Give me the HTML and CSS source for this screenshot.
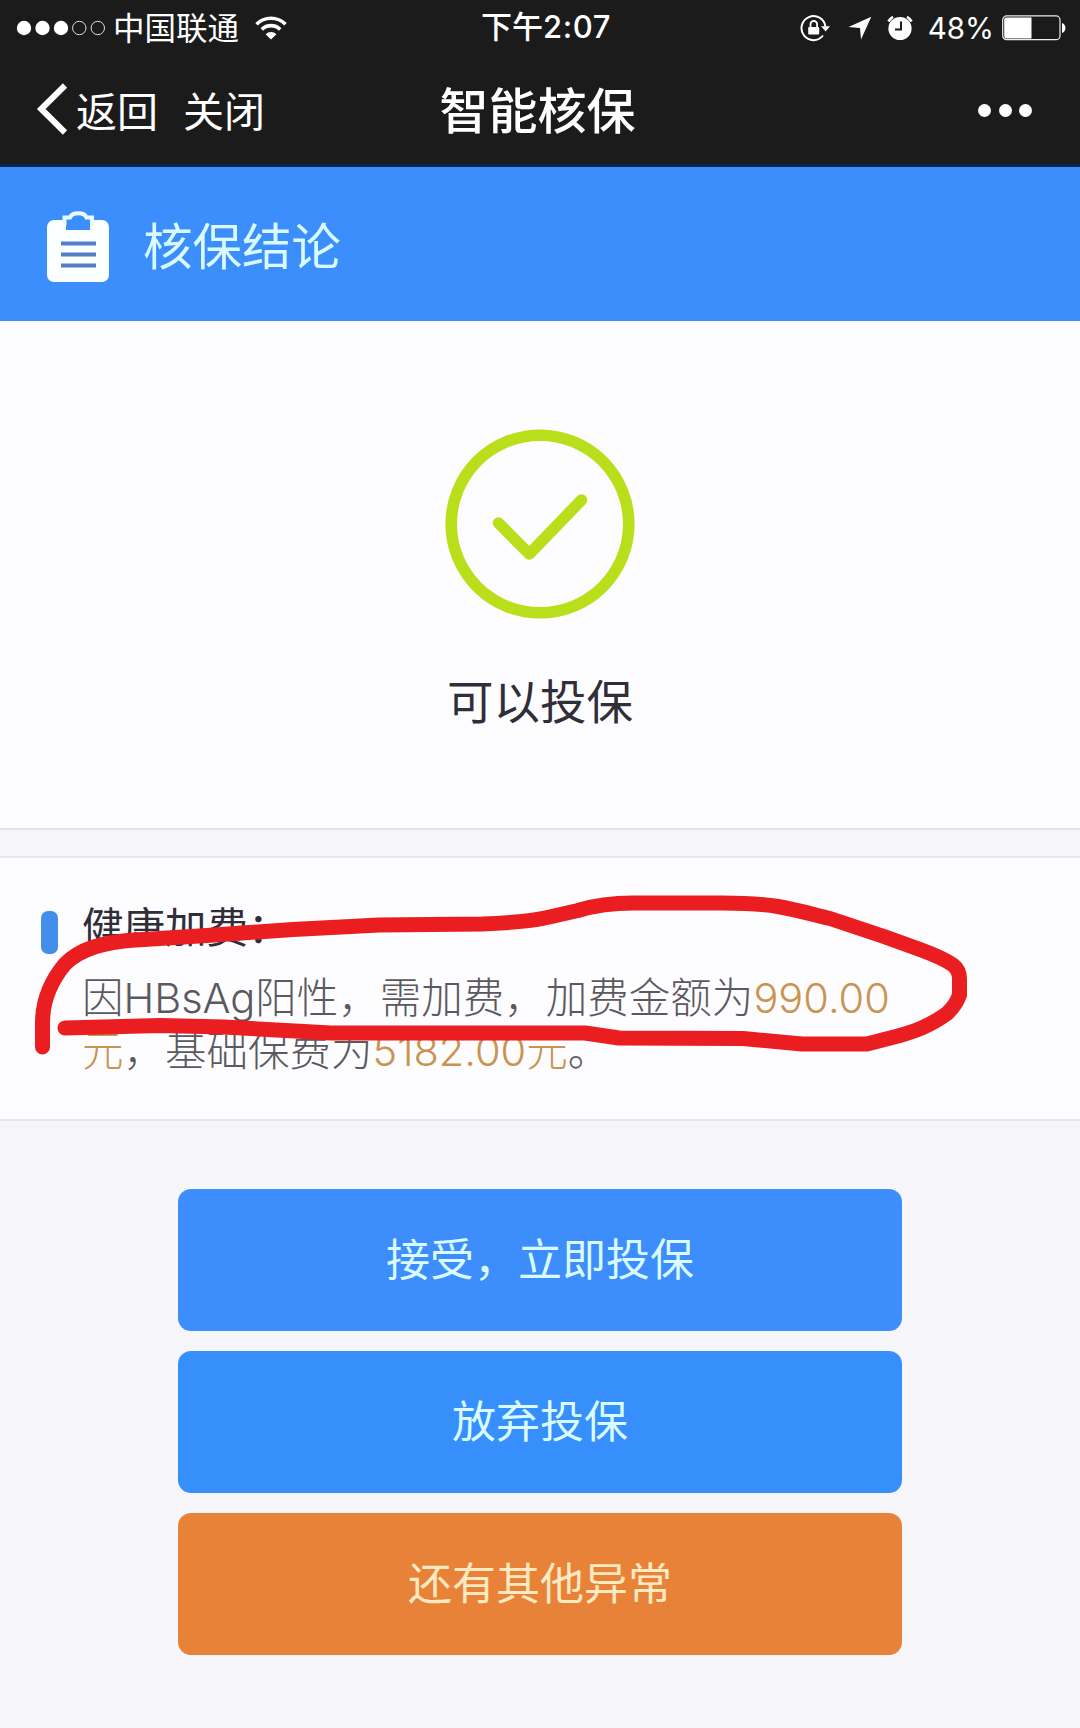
FILE: index.html
```html
<!DOCTYPE html>
<html lang="zh-CN">
<head>
    <meta charset="UTF-8">
    <meta name="viewport" content="width=device-width, initial-scale=1.0">
    <title>智能核保</title>
    <link rel="stylesheet" href="styles.css">
</head>
<body>

<div class="page">
    <header class="header">
        <div class="status-bar">
            <div class="status-left">
                <svg class="signal" width="90" height="18" viewBox="0 0 90 18">
                    <g fill="#fff">
                        <circle cx="8" cy="9" r="7.2"/>
                        <circle cx="26.5" cy="9" r="7.2"/>
                        <circle cx="45" cy="9" r="7.2"/>
                    </g>
                    <g fill="none" stroke="#ddd" stroke-width="1">
                        <circle cx="63.3" cy="9" r="6.7"/>
                        <circle cx="81.8" cy="9" r="6.7"/>
                    </g>
                </svg>
                <span class="carrier">中国联通</span>
                <svg class="wifi" width="32" height="24" viewBox="0 0 32 24">
                    <g fill="none" stroke="#fff" stroke-width="3.6">
                        <path d="M1.5 8.3a20.5 20.5 0 0 1 29 0"/>
                        <path d="M6.8 13.4a13 13 0 0 1 18.4 0"/>
                    </g>
                    <path d="M16 23.6l-5.4-5.3a7.6 7.6 0 0 1 10.8 0z" fill="#fff"/>
                </svg>
            </div>
            <div class="status-time">下午<span class="clock">2:07</span></div>
            <div class="status-right">
                <svg class="lock" width="30" height="28" viewBox="0 0 30 28">
                    <path d="M25.4 12.5A12 12 0 1 0 23 21.5" fill="none" stroke="#fff" stroke-width="2"/>
                    <path d="M21 12.2h9l-4.3 5.2z" fill="#fff"/>
                    <rect x="8.2" y="13" width="11" height="7.6" rx="1" fill="#fff"/>
                    <path d="M10.5 13.5v-3.2a3.3 3.3 0 0 1 6.6 0v3.2" fill="none" stroke="#fff" stroke-width="1.8"/>
                </svg>
                <svg class="location" width="24" height="24" viewBox="0 0 24 24">
                    <path d="M23.3 .8L13 23.4 12 12 .5 11z" fill="#fff"/>
                </svg>
                <svg class="alarm" width="26" height="26" viewBox="0 0 26 26">
                    <circle cx="13" cy="13.5" r="11.6" fill="#fff"/>
                    <path d="M14 6.5v8H8" fill="none" stroke="#1b1b1b" stroke-width="2"/>
                    <path d="M1.4 6.5a15 15 0 0 1 4.6-4.6M24.6 6.5a15 15 0 0 0-4.6-4.6" fill="none" stroke="#fff" stroke-width="2.6"/>
                </svg>
                <span class="percent">48%</span>
                <svg class="battery" width="66" height="26" viewBox="0 0 66 26">
                    <rect x=".7" y=".9" width="57.3" height="23.8" rx="4" fill="none" stroke="#eee" stroke-width="1.2"/>
                    <path d="M4.4 2.4H29.5v21H4.4a2.2 2.2 0 0 1-2.2-2.2V4.6a2.2 2.2 0 0 1 2.2-2.2z" fill="#fff"/>
                    <path d="M60 8c4.6 1.2 4.6 8.8 0 10z" fill="#fff"/>
                </svg>
            </div>
        </div>
        <nav class="nav">
            <div class="nav-left">
                <svg class="back" width="32" height="52" viewBox="0 0 32 52">
                    <path d="M29 2.5L5.2 26 29 49.5" fill="none" stroke="#fff" stroke-width="6"/>
                </svg>
                <a class="nav-link">返回</a>
                <a class="nav-link">关闭</a>
            </div>
            <h1 class="nav-title">智能核保</h1>
            <div class="nav-right">
                <span class="dot"></span>
                <span class="dot"></span>
                <span class="dot"></span>
            </div>
        </nav>
    </header>

    <div class="banner">
        <svg class="clipboard" width="64" height="72" viewBox="0 0 64 72">
            <rect x="1" y="9" width="62" height="62" rx="7" fill="#fbffff"/>
            <path d="M20 19V8h6a6.5 6.5 0 0 1 13 0h5v11z" fill="#3c8efc"/>
            <path d="M18.5 14V6.500h5.500a8.500 5.500 0 0 1 16.500 0h5.500V14" fill="none" stroke="#e9fbff" stroke-width="4"/>
            <path d="M15 32.500h35M15 43.500h35M15 54.500h35" stroke="#527fcb" stroke-width="4"/>
        </svg>
        <span class="banner-text">核保结论</span>
    </div>

    <section class="result">
        <svg class="result-icon" width="190" height="190" viewBox="0 0 190 190">
            <g fill="none" stroke="#b9df1b">
                <circle cx="95" cy="95" r="88.8" stroke-width="11.6"/>
                <path d="M53.5 94L84.3 125 136.500 71" stroke-width="11.5" stroke-linecap="round" stroke-linejoin="round"/>
            </g>
        </svg>
        <p class="result-text">可以投保</p>
    </section>

    <section class="detail">
        <span class="marker"></span>
        <div class="detail-body">
            <h2 class="detail-title">健康加费：</h2>
            <p class="detail-text">因<span class="latin">HBsAg</span>阳性，需加费，加费金额为<span class="money">990.00</span><br><span class="money">元</span>，基础保费为<span class="money">5182.00元</span>。</p>
        </div>
        <!-- hand drawn circle round the extra fee -->
        <svg class="scribble" width="1080" height="262" viewBox="0 858 1080 262">
            <path d="M42.5 1047V1023C42.5 1002 50 982 65 964C80 949 102 942 135 940L207 935.500L293 929.500L379 925L482 924C508 923 528 921.500 545 918L578 910.500C596 905 612 903 633 903H722C745 903 760 903.500 778 906.500C798 910 815 915 830 918.500L884 936.500L920 949.500C935 955 944 958.500 953 965Q959.500 970 959.500 979V995C957 1002 953 1008 947 1013.500C930 1026 915 1031 898 1036L867 1044H802L743 1038.500L619 1038L585 1033H331L224 1027L160 1025.500L65 1028"/>
        </svg>
    </section>

    <div class="actions">
        <button class="btn">接受，立即投保</button>
        <button class="btn btn-second">放弃投保</button>
        <button class="btn btn-orange">还有其他异常</button>
    </div>
</div>

</body>
</html>
```
FILE: styles.css
```css
* {
    box-sizing: border-box;
}

body {
    margin: 0;
    font-family: "Noto Sans CJK SC", sans-serif;
    background-color: #f6f5fa;
}

svg {
    display: block;
    flex: none;
}

h1, h2, p {
    margin: 0;
}

.page {
    height: 1728px;
    overflow: hidden;
}

.header {
    height: 167px;
    background-color: #1b1b1b;
    border-bottom: 3px solid #08244f;
    color: #fff;
}

.status-bar, .nav {
    display: grid;
    grid-template-columns: 1fr auto 1fr;
    align-items: center;
}

.status-bar {
    height: 53px;
    padding: 0 12px 0 16px;
}

.status-left, .status-right, .nav-left, .nav-right {
    display: flex;
    align-items: center;
}

.carrier {
    margin: 0 16px 0 7px;
    padding-bottom: 3px;
    font-size: 31.5px;
    line-height: 50px;
}

.status-time {
    padding: 0 0 3px 8px;
    font-size: 31px;
    font-weight: 500;
    line-height: 50px;
}

.clock {
    font-family: Inter, sans-serif;
    font-size: 31px;
    letter-spacing: 0.6px;
}

.status-right {
    justify-content: flex-end;
}

.location {
    margin: 1px 15px 0 18px;
}

.percent {
    margin: 1px 8px 0 15px;
    font-family: Inter, sans-serif;
    font-size: 29.5px;
    line-height: 50px;
}

.nav {
    height: 111px;
    padding: 0 48px 0 36px;
}

.nav-left {
    gap: 25px;
}

.back {
    margin-right: -17px;
}

.nav-link {
    font-size: 41px;
    line-height: 60px;
    color: #fff;
}

.nav-title {
    padding: 0 0 2px 7px;
    font-size: 49px;
    font-weight: 500;
    line-height: 60px;
}

.nav-right {
    justify-content: flex-end;
    gap: 7.5px;
    padding-top: 3px;
}

.dot {
    width: 13px;
    height: 13px;
    border-radius: 50%;
    background-color: #fff;
}

.banner {
    display: flex;
    align-items: center;
    height: 154px;
    padding: 6px 46px 0;
    background-color: #3c8efc;
}

.banner-text {
    margin-left: 33px;
    padding-bottom: 6px;
    font-size: 49.5px;
    line-height: 70px;
    color: #d8fcff;
}

.result {
    display: flex;
    flex-direction: column;
    align-items: center;
    height: 509px;
    padding-top: 108px;
    background-color: #fdfcfe;
    border-bottom: 2px solid #e4e3e8;
}

.result-text {
    margin-top: 45px;
    font-size: 46.5px;
    line-height: 70px;
    color: #302e38;
}

.detail {
    position: relative;
    display: flex;
    height: 265px;
    margin-top: 26px;
    padding: 53px 41px 0;
    background-color: #fdfcfe;
    border-top: 2px solid #e8e7ec;
    border-bottom: 2px solid #e8e6ec;
}

.marker {
    width: 17px;
    height: 43px;
    margin-right: 24px;
    border-radius: 7px;
    background-color: #418fe9;
}

.detail-body {
    margin-top: -4px;
    white-space: nowrap;
}

.detail-title {
    font-size: 41.5px;
    font-weight: 400;
    line-height: 36px;
    color: #302e38;
}

.detail-text {
    margin-top: 27px;
    font-size: 41.5px;
    line-height: 50px;
    font-weight: 300;
    color: #5b5960;
}

.latin, .money {
    font-family: Inter, "Noto Sans CJK SC", sans-serif;
}

.money {
    color: #c9944f;
}

.scribble {
    position: absolute;
    left: 0;
    top: 0;
}

.scribble path {
    fill: none;
    stroke: #ea1e20;
    stroke-width: 15;
    stroke-linecap: round;
    stroke-linejoin: round;
}

.actions {
    display: flex;
    flex-direction: column;
    gap: 20.5px;
    padding: 68px 178px 0;
}

.btn {
    height: 141.5px;
    padding: 0 0 5px;
    border: none;
    border-radius: 13px;
    background-color: #3d8efc;
    color: #d8fcff;
    font-family: inherit;
    font-size: 44px;
    font-weight: 400;
}

.btn-second {
    background-color: #368ffb;
}

.btn-orange {
    background-color: #e98239;
    color: #ffe9c0;
}
```
